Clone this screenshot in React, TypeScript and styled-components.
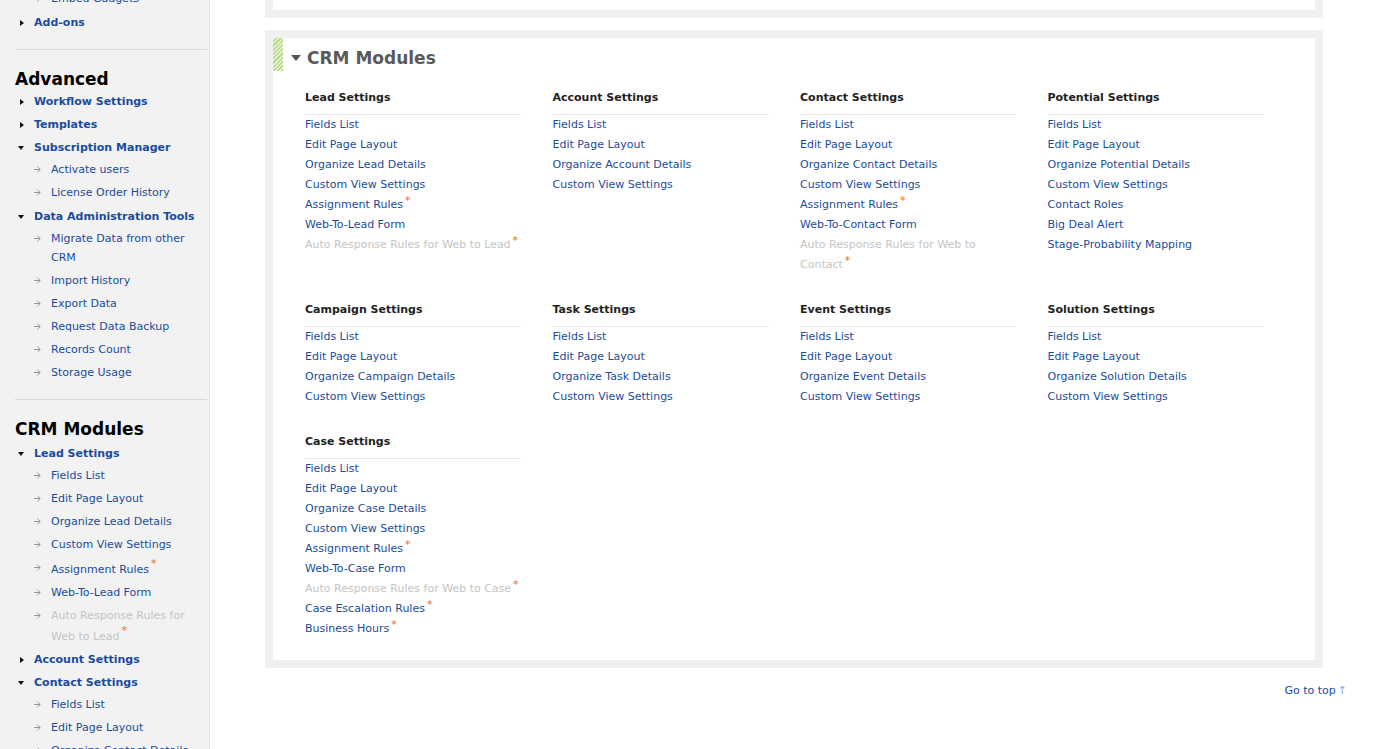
import React from "react";
import styled, { createGlobalStyle } from "styled-components";

const GlobalStyle = createGlobalStyle`
  html, body { margin: 0; padding: 0; background: #fff; }
  body { font-family: "DejaVu Sans", Verdana, sans-serif; font-size: 11px; color: #222; overflow: hidden; }
  * { box-sizing: border-box; }
`;

const Page = styled.div`
  display: flex;
  align-items: stretch;
  min-height: 100vh;
`;

const Sidebar = styled.aside`
  width: 210px;
  flex-shrink: 0;
  background: #f2f2f2;
  border-right: 1px solid #ede4d6;
  padding: 0 2px 0 15px;
`;

const SideInner = styled.div`
  margin-top: -13px;
`;

const ParentList = styled.ul`
  list-style: none;
  margin: 0;
  padding: 0;
`;

const ParentItem = styled.li``;

const ParentRow = styled.div`
  display: flex;
  align-items: center;
  line-height: 19px;
  padding: 2px 0;
`;

const Tri = styled.span<{ $open?: boolean }>`
  width: 19px;
  flex-shrink: 0;
  display: flex;
  align-items: center;
  padding-left: 3px;
  &::before {
    content: "";
    display: block;
    width: 0;
    height: 0;
    ${(p) =>
      p.$open
        ? `border-left: 3.5px solid transparent; border-right: 3.5px solid transparent; border-top: 4px solid #111; margin-top: 1px;`
        : `border-top: 3.5px solid transparent; border-bottom: 3.5px solid transparent; border-left: 4px solid #111; margin-left: 2px;`}
  }
`;

const ParentLink = styled.a`
  color: #1a4c9c;
  font-weight: bold;
  text-decoration: none;
`;

const SubList = styled.ul`
  list-style: none;
  margin: -1px 0 1px 0;
  padding: 0;
`;

const SubItem = styled.li`
  display: flex;
  align-items: flex-start;
  line-height: 19px;
  padding: 2px 0;
`;

const SubArrow = styled.span`
  width: 36px;
  flex-shrink: 0;
  display: flex;
  justify-content: flex-end;
  padding-right: 10px;
  padding-top: 6px;
`;

const SubLink = styled.a<{ $disabled?: boolean }>`
  color: ${(p) => (p.$disabled ? "#c4c4c4" : "#1a4c9c")};
  text-decoration: none;
  max-width: 145px;
`;

const Star = styled.sup`
  color: #ff6a00;
  font-size: 11px;
  line-height: 0;
  margin-left: 2px;
  vertical-align: 4px;
`;

const SideStar = styled(Star)`
  line-height: 1;
  vertical-align: 5.5px;
`;

const Separator = styled.hr`
  border: 0;
  border-top: 1px solid #d9d9d9;
  margin: 15px 0 0 0;
  height: 0;
`;

const SideHeading = styled.h2<{ $gap?: number }>`
  font-size: 17px;
  line-height: 22px;
  font-weight: bold;
  color: #000;
  margin: 18px 0 ${(p) => p.$gap ?? 0}px 0;
`;

const Main = styled.main`
  margin-left: 55px;
  width: 1082px;
  display: flex;
  flex-direction: column;
`;

const Card = styled.section`
  border: 8px solid #f0f0f0;
  background: #fff;
  margin-right: 24px;
`;

const TopCard = styled(Card)`
  margin-top: -40px;
  height: 58px;
`;

const ModulesCard = styled(Card)`
  margin-top: 12px;
  padding-bottom: 21px;
`;

const TitleRow = styled.div`
  display: flex;
  align-items: flex-start;
`;

const Stripe = styled.div`
  width: 10px;
  height: 33px;
  background: repeating-linear-gradient(
    -45deg,
    #b9dc8c 0px,
    #b9dc8c 1.5px,
    #e6f2d6 1.5px,
    #e6f2d6 3px
  );
`;

const TitleToggle = styled.span`
  margin: 17px 6px 0 8px;
  width: 0;
  height: 0;
  border-left: 5px solid transparent;
  border-right: 5px solid transparent;
  border-top: 6px solid #555;
`;

const Title = styled.h2`
  margin: 9px 0 0 0;
  font-size: 17px;
  line-height: 22px;
  font-weight: bold;
  color: #5a5a5a;
`;

const Grid = styled.div`
  display: grid;
  grid-template-columns: repeat(4, 216px);
  column-gap: 31.5px;
  row-gap: 27px;
  padding-left: 32px;
  margin-top: 19px;
`;

const Group = styled.div``;

const GroupHeader = styled.h3`
  margin: 0;
  font-size: 11px;
  font-weight: bold;
  line-height: 16px;
  color: #222;
  padding-bottom: 8px;
  border-bottom: 1px solid #e8e8e8;
`;

const LinkList = styled.ul`
  list-style: none;
  margin: 0;
  padding: 0;
`;

const LinkItem = styled.li`
  line-height: 20px;
`;

const GridLink = styled.a<{ $disabled?: boolean }>`
  color: ${(p) => (p.$disabled ? "#c4c4c4" : "#1a4c9c")};
  text-decoration: none;
`;

const Footer = styled.div`
  display: flex;
  justify-content: flex-end;
  margin-top: 15px;
  line-height: 16px;
`;

const TopLink = styled.a`
  color: #1a4c9c;
  text-decoration: none;
`;

const UpArrow = styled.span`
  color: #7fb0dd;
  margin-left: 2px;
`;

type Link = { label: string; star?: boolean; disabled?: boolean };

const L = (label: string, star = false, disabled = false): Link => ({ label, star, disabled });

const groups: { title: string; links: Link[] }[] = [
  {
    title: "Lead Settings",
    links: [
      L("Fields List"),
      L("Edit Page Layout"),
      L("Organize Lead Details"),
      L("Custom View Settings"),
      L("Assignment Rules", true),
      L("Web-To-Lead Form"),
      L("Auto Response Rules for Web to Lead", true, true),
    ],
  },
  {
    title: "Account Settings",
    links: [L("Fields List"), L("Edit Page Layout"), L("Organize Account Details"), L("Custom View Settings")],
  },
  {
    title: "Contact Settings",
    links: [
      L("Fields List"),
      L("Edit Page Layout"),
      L("Organize Contact Details"),
      L("Custom View Settings"),
      L("Assignment Rules", true),
      L("Web-To-Contact Form"),
      L("Auto Response Rules for Web to Contact", true, true),
    ],
  },
  {
    title: "Potential Settings",
    links: [
      L("Fields List"),
      L("Edit Page Layout"),
      L("Organize Potential Details"),
      L("Custom View Settings"),
      L("Contact Roles"),
      L("Big Deal Alert"),
      L("Stage-Probability Mapping"),
    ],
  },
  {
    title: "Campaign Settings",
    links: [L("Fields List"), L("Edit Page Layout"), L("Organize Campaign Details"), L("Custom View Settings")],
  },
  {
    title: "Task Settings",
    links: [L("Fields List"), L("Edit Page Layout"), L("Organize Task Details"), L("Custom View Settings")],
  },
  {
    title: "Event Settings",
    links: [L("Fields List"), L("Edit Page Layout"), L("Organize Event Details"), L("Custom View Settings")],
  },
  {
    title: "Solution Settings",
    links: [L("Fields List"), L("Edit Page Layout"), L("Organize Solution Details"), L("Custom View Settings")],
  },
  {
    title: "Case Settings",
    links: [
      L("Fields List"),
      L("Edit Page Layout"),
      L("Organize Case Details"),
      L("Custom View Settings"),
      L("Assignment Rules", true),
      L("Web-To-Case Form"),
      L("Auto Response Rules for Web to Case", true, true),
      L("Case Escalation Rules", true),
      L("Business Hours", true),
    ],
  },
];

type SideNode = { label: string; open?: boolean; children?: Link[] };

const Arrow = () => (
  <svg width="7" height="7" viewBox="0 0 7 7" fill="none" stroke="#8a8a8a" strokeWidth="0.9">
    <path d="M0 3.5 H6.2 M3.4 0.8 L6.2 3.5 L3.4 6.2" />
  </svg>
);

const SideTree = ({ nodes }: { nodes: SideNode[] }) => (
  <ParentList>
    {nodes.map((n, i) => (
      <ParentItem key={i}>
        {n.label && (
          <ParentRow>
            <Tri $open={n.open} />
            <ParentLink href="#">{n.label}</ParentLink>
          </ParentRow>
        )}
        {n.open && n.children && (
          <SubList>
            {n.children.map((c, j) => (
              <SubItem key={j}>
                <SubArrow>
                  <Arrow />
                </SubArrow>
                <SubLink href="#" $disabled={c.disabled}>
                  {c.label}
                  {c.star && <SideStar>*</SideStar>}
                </SubLink>
              </SubItem>
            ))}
          </SubList>
        )}
      </ParentItem>
    ))}
  </ParentList>
);

export default function App() {
  return (
    <>
      <GlobalStyle />
      <Page>
        <Sidebar>
          <SideInner>
            <SideTree
              nodes={[
                { label: "", open: true, children: [L("Embed Gadgets")] },
                { label: "Add-ons" },
              ]}
            />
            <Separator />
            <SideHeading>Advanced</SideHeading>
            <SideTree
              nodes={[
                { label: "Workflow Settings" },
                { label: "Templates" },
                {
                  label: "Subscription Manager",
                  open: true,
                  children: [L("Activate users"), L("License Order History")],
                },
                {
                  label: "Data Administration Tools",
                  open: true,
                  children: [
                    L("Migrate Data from other CRM"),
                    L("Import History"),
                    L("Export Data"),
                    L("Request Data Backup"),
                    L("Records Count"),
                    L("Storage Usage"),
                  ],
                },
              ]}
            />
            <Separator />
            <SideHeading $gap={2}>CRM Modules</SideHeading>
            <SideTree
              nodes={[
                {
                  label: "Lead Settings",
                  open: true,
                  children: [
                    L("Fields List"),
                    L("Edit Page Layout"),
                    L("Organize Lead Details"),
                    L("Custom View Settings"),
                    L("Assignment Rules", true),
                    L("Web-To-Lead Form"),
                    L("Auto Response Rules for Web to Lead", true, true),
                  ],
                },
                { label: "Account Settings" },
                {
                  label: "Contact Settings",
                  open: true,
                  children: [
                    L("Fields List"),
                    L("Edit Page Layout"),
                    L("Organize Contact Details"),
                    L("Custom View Settings"),
                    L("Assignment Rules", true),
                  ],
                },
              ]}
            />
          </SideInner>
        </Sidebar>
        <Main>
          <TopCard />
          <ModulesCard>
            <TitleRow>
              <Stripe />
              <TitleToggle />
              <Title>CRM Modules</Title>
            </TitleRow>
            <Grid>
              {groups.map((g) => (
                <Group key={g.title}>
                  <GroupHeader>{g.title}</GroupHeader>
                  <LinkList>
                    {g.links.map((l, i) => (
                      <LinkItem key={i}>
                        <GridLink href="#" $disabled={l.disabled}>
                          {l.label}
                        </GridLink>
                        {l.star && <Star>*</Star>}
                      </LinkItem>
                    ))}
                  </LinkList>
                </Group>
              ))}
            </Grid>
          </ModulesCard>
          <Footer>
            <TopLink href="#">Go to top</TopLink>
            <UpArrow>↑</UpArrow>
          </Footer>
        </Main>
      </Page>
    </>
  );
}
